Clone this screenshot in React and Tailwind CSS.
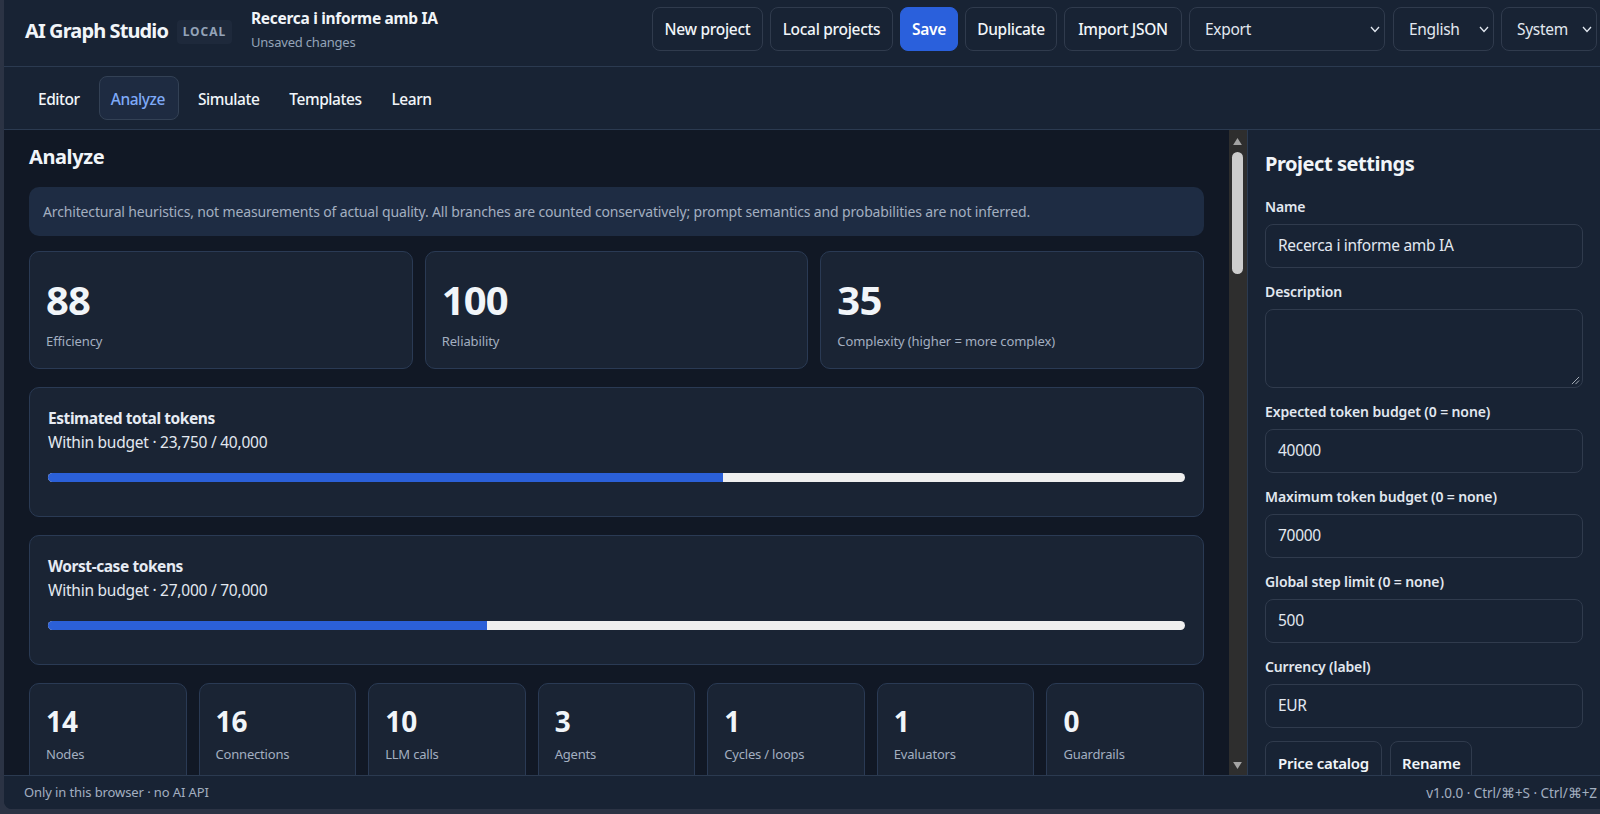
const font = { fontFamily: '"Noto Sans", "Open Sans", sans-serif' };

function HBtn({ children, primary, width }) {
  return (
    <button className={`h-[44px] shrink-0 ${width} pt-[1px] rounded-[8px] border text-[15.5px] font-medium tracking-[-0.3px] ${primary ? 'bg-[#2a60dc] border-[#2a60dc] text-white font-semibold' : 'bg-[#182334] border-[#303b4d] text-[#f1f5f9]'}`}>
      {children}
    </button>
  );
}

function Chevron({ className }) {
  return (
    <svg viewBox="0 0 12 12" className={className} fill="none" stroke="#e2e8f0" strokeWidth="1.3">
      <path d="M2 4l4 4.5L10 4" />
    </svg>
  );
}

function HSelect({ label, width }) {
  return (
    <div className={`h-[44px] shrink-0 ${width} pl-[15px] pr-[3px] rounded-[8px] border border-[#303b4d] bg-[#182334] flex items-center justify-between text-[15.5px] text-[#e2e8f0] tracking-[-0.3px]`}>
      <span className="pt-[1px]">{label}</span>
      <Chevron className="w-[12px] h-[12px]" />
    </div>
  );
}

function Tab({ children, active }) {
  return (
    <div className={`h-[44px] flex items-center pt-[3px] rounded-[8px] border text-[15.5px] font-medium tracking-[-0.45px] ${active ? 'pl-[11px] pr-[13px] ml-[2px] mr-[2px] bg-[#1e2b41] border-[#334155] text-[#7eaaf8]' : 'px-[12px] border-transparent text-[#f1f5f9]'}`}>
      {children}
    </div>
  );
}

function Stat({ value, label }) {
  return (
    <div className="h-[118px] rounded-[10px] border border-[#2a3a54] bg-[#1a2434] px-[16px] pt-[22px]">
      <div className="text-[40px] leading-[52px] font-bold text-[#f1f5f9] tracking-[-0.8px]">{value}</div>
      <div className="text-[13px] leading-[18px] mt-[6px] text-[#a3afc0] tracking-[-0.1px]">{label}</div>
    </div>
  );
}

function Budget({ title, sub, pct }) {
  return (
    <div className="h-[130px] rounded-[10px] border border-[#2a3a54] bg-[#1a2434] px-[18px] pt-[19px]">
      <div className="text-[15.5px] leading-[22px] font-bold text-[#e6ebf3] tracking-[-0.43px]">{title}</div>
      <div className="text-[15.5px] leading-[22px] mt-[2px] text-[#e2e8f0] tracking-[-0.24px]">{sub}</div>
      <div className="mt-[20px] h-[9px] rounded-full bg-[#efefef] overflow-hidden">
        <div className="h-full bg-[#2b60d8]" style={{ width: pct }} />
      </div>
    </div>
  );
}

function Mini({ value, label }) {
  return (
    <div className="h-[118px] rounded-[10px] border border-[#2a3a54] bg-[#1a2434] px-[16px] pt-[18px]">
      <div className="text-[28px] leading-[38px] font-bold text-[#f1f5f9]">{value}</div>
      <div className="text-[13px] leading-[18px] mt-[5px] text-[#a3afc0] tracking-[-0.2px]">{label}</div>
    </div>
  );
}

function Label({ children }) {
  return <div className="text-[14px] leading-[20px] font-semibold text-[#e2e8f0] tracking-[-0.12px] mb-[7px]">{children}</div>;
}

function Field({ label, value }) {
  return (
    <div className="mb-[14px]">
      <Label>{label}</Label>
      <div className="h-[44px] rounded-[8px] border border-[#303b4d] bg-[#182334] px-[12px] flex items-center text-[15.5px] text-[#e2e8f0] tracking-[-0.3px]">{value}</div>
    </div>
  );
}

export default function App() {
  return (
    <div style={font} className="w-[1600px] h-[814px] overflow-hidden bg-[#2b3344] pl-[4px] pb-[5px]">
      <div className="h-[809px] flex flex-col bg-[#182334] rounded-bl-[8px] overflow-hidden">
        <header className="h-[67px] shrink-0 border-b border-[#2b3a50] flex items-start justify-between pl-[21px] pr-[3px] pt-[7px]">
          <div className="flex items-center">
            <span className="text-[20px] font-bold text-[#f1f5f9] tracking-[-0.9px] mt-[3px]">AI Graph Studio</span>
            <span className="ml-[9px] mt-[5px] h-[24px] w-[55px] flex items-center justify-center bg-[#1e293b] text-[#94a3b8] text-[12px] font-bold tracking-[1px] rounded-[4px]">LOCAL</span>
            <div className="ml-[19px] flex flex-col">
              <span className="text-[15.5px] leading-[22px] font-bold text-[#f1f5f9] tracking-[-0.3px]">Recerca i informe amb IA</span>
              <span className="text-[13px] leading-[18px] mt-[4px] text-[#94a3b8] tracking-[-0.2px]">Unsaved changes</span>
            </div>
          </div>
          <div className="flex items-center gap-[7px]">
            <HBtn width="w-[111px]">New project</HBtn>
            <HBtn width="w-[123px]">Local projects</HBtn>
            <HBtn width="w-[58px]" primary>Save</HBtn>
            <HBtn width="w-[92px]">Duplicate</HBtn>
            <HBtn width="w-[118px]">Import JSON</HBtn>
            <HSelect label="Export" width="w-[196px]" />
            <HSelect label="English" width="w-[101px] ml-[1px]" />
            <HSelect label="System" width="w-[96px]" />
          </div>
        </header>
        <nav className="h-[63px] shrink-0 border-b border-[#2b3a50] flex items-center gap-[4px] pl-[21px]">
          <Tab>Editor</Tab>
          <Tab active>Analyze</Tab>
          <Tab>Simulate</Tab>
          <Tab>Templates</Tab>
          <Tab>Learn</Tab>
        </nav>
        <div className="flex-1 min-h-0 flex">
          <main className="flex-1 min-w-0 bg-[#111825] overflow-hidden pl-[25px] pr-[25px] pt-[13px]">
            <h1 className="text-[20px] leading-[28px] font-bold text-[#f1f5f9] tracking-[-0.4px]">Analyze</h1>
            <div className="mt-[16px] h-[49px] rounded-[10px] bg-[#1e2c43] pl-[14px] pr-[13px] flex items-center text-[14px] text-[#a3afc0] tracking-[-0.15px]">
              Architectural heuristics, not measurements of actual quality. All branches are counted conservatively; prompt semantics and probabilities are not inferred.
            </div>
            <div className="mt-[15px] grid grid-cols-3 gap-[12px]">
              <Stat value="88" label="Efficiency" />
              <Stat value="100" label="Reliability" />
              <Stat value="35" label="Complexity (higher = more complex)" />
            </div>
            <div className="mt-[18px]">
              <Budget title="Estimated total tokens" sub="Within budget · 23,750 / 40,000" pct="59.4%" />
            </div>
            <div className="mt-[18px]">
              <Budget title="Worst-case tokens" sub="Within budget · 27,000 / 70,000" pct="38.6%" />
            </div>
            <div className="mt-[18px] grid grid-cols-7 gap-[12px]">
              <Mini value="14" label="Nodes" />
              <Mini value="16" label="Connections" />
              <Mini value="10" label="LLM calls" />
              <Mini value="3" label="Agents" />
              <Mini value="1" label="Cycles / loops" />
              <Mini value="1" label="Evaluators" />
              <Mini value="0" label="Guardrails" />
            </div>
          </main>
          <div className="w-[18px] shrink-0 bg-[#2e2e2e] flex flex-col items-center pr-[1px]">
            <svg viewBox="0 0 10 8" className="w-[9px] h-[7px] mt-[8px]" fill="#a3a3a3"><path d="M5 0l5 8H0z" /></svg>
            <div className="w-[11px] h-[122px] rounded-full bg-[#cdcdcd] mt-[7px]" />
            <div className="flex-1" />
            <svg viewBox="0 0 10 8" className="w-[9px] h-[7px] mb-[6px]" fill="#a3a3a3"><path d="M0 0h10L5 8z" /></svg>
          </div>
          <aside className="w-[353px] shrink-0 border-l border-[#2b3a50] overflow-hidden pl-[17px] pr-[17px] pt-[20px]">
            <h2 className="text-[20px] leading-[28px] font-bold text-[#f1f5f9] tracking-[-0.45px] mb-[19px]">Project settings</h2>
            <Field label="Name" value="Recerca i informe amb IA" />
            <div className="mb-[14px]">
              <Label>Description</Label>
              <div className="h-[79px] rounded-[8px] border border-[#303b4d] bg-[#182334] relative">
                <svg viewBox="0 0 10 10" className="absolute right-[2px] bottom-[2px] w-[9px] h-[9px]" stroke="#b6bcc6" strokeWidth="1" fill="none"><path d="M1 9l8-8M5 9l4-4" /></svg>
              </div>
            </div>
            <Field label="Expected token budget (0 = none)" value="40000" />
            <Field label="Maximum token budget (0 = none)" value="70000" />
            <Field label="Global step limit (0 = none)" value="500" />
            <Field label="Currency (label)" value="EUR" />
            <div className="flex gap-[8px] -mt-[1px]">
              <div className="h-[44px] px-[12px] rounded-[8px] border border-[#303b4d] flex items-center text-[15px] font-semibold text-[#f1f5f9] tracking-[-0.25px]">Price catalog</div>
              <div className="h-[44px] px-[11px] rounded-[8px] border border-[#303b4d] flex items-center text-[15px] font-semibold text-[#f1f5f9] tracking-[-0.25px]">Rename</div>
            </div>
          </aside>
        </div>
        <footer className="h-[34px] shrink-0 border-t border-[#2b3a50] bg-[#182334] flex items-center justify-between pl-[20px] pr-[3px] pt-[1px] text-[#a3afc0]">
          <span className="text-[13px] tracking-[-0.1px]">Only in this browser · no AI API</span>
          <span className="text-[13.5px] tracking-[-0.05px]">v1.0.0 · Ctrl/⌘+S · Ctrl/⌘+Z</span>
        </footer>
      </div>
    </div>
  );
}
